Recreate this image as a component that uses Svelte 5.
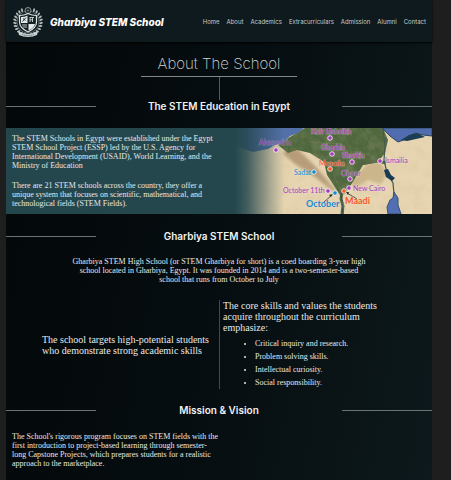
<script>
  const links = ['Home', 'About', 'Academics', 'Extracurriculars', 'Admission', 'Alumni', 'Contact'];
  const skills = ['Critical inquiry and research.', 'Problem solving skills.', 'Intellectual curiosity.', 'Social responsibility.'];
  const leaves = Array.from({ length: 22 }, (_, i) => {
    const side = i % 2 ? 1 : -1;
    const step = Math.floor(i / 2);
    const angle = (18 + step * 13.5) * Math.PI / 180;
    return { x: 16 + side * 13.2 * Math.sin(angle), y: 15 + 13.2 * Math.cos(angle), turn: side * (50 - step * 13) };
  });
  const purple = '#a63cba';
  const orange = '#f4591f';
  const blue = '#168bd2';
  const cities = [
    { name: 'Alexandria', x: 41, y: 22, tx: 24, ty: 17, color: purple, faded: true },
    { name: 'Kafr Elsheikh', x: 95, y: 10, tx: 76, ty: 6, color: purple },
    { name: 'Gharbia', x: 97, y: 26, tx: 86, ty: 22, color: purple },
    { name: 'Sharkia', x: 117, y: 34, tx: 107, ty: 30, color: purple },
    { name: 'Menofia', x: 95, y: 41, tx: 84, ty: 38, color: orange },
    { name: 'Sadat', x: 79, y: 44, tx: 59, ty: 47, color: blue },
    { name: 'Obour', x: 115, y: 51, tx: 106, ty: 48, color: purple },
    { name: 'Ismailia', x: 145, y: 33, tx: 150, ty: 35, color: purple },
    { name: 'New Cairo', x: 114, y: 60, tx: 118, ty: 63, color: purple },
    { name: 'October 11th', x: 93, y: 63, tx: 48, ty: 65, color: purple },
    { name: 'October', x: 100, y: 65, tx: 71, ty: 79, color: blue, big: true },
    { name: 'Maadi', x: 109, y: 63, tx: 110, ty: 76, color: orange, big: true }
  ];
</script>

<div class="page">
  <header>
    <a class="brand" href="#home">
      <svg class="crest" viewBox="0 0 32 31" aria-hidden="true">
        {#each leaves as leaf}
          <ellipse cx={leaf.x} cy={leaf.y} rx="1.9" ry="1" fill="#aeb8b9" transform="rotate({leaf.turn} {leaf.x} {leaf.y})" />
        {/each}
        <circle cx="16" cy="15" r="11" fill="none" stroke="#8b989a" stroke-width=".6" />
        <circle cx="16" cy="3.5" r="3" fill="#142023" stroke="#aab4b5" stroke-width=".8" />
        <path d="M14.5 3.5h3M16 2v3" stroke="#8b989a" stroke-width=".5" />
        <path d="M7.5 8.5Q12 8.5 16 6.5Q20 8.5 24.5 8.5V15Q24.5 21 16 25Q7.5 21 7.5 15Z" fill="#142023" stroke="#dce2e2" stroke-width="1.2" />
        <path d="M9 10Q13 10 15.5 8.5V16H9ZM16.5 17H23Q22 21 16.5 23.5Z" fill="#e3e8e8" />
        <path d="M10.5 14.5L14 10.5M11 11.5l2.5 2" stroke="#23363a" stroke-width="1" />
        <path d="M18 10v5M18 10.5h4M18 12.8h3M20.5 11v4M10 18h5M11 20h4" stroke="#cbd2d3" stroke-width=".9" />
        <path d="M6 24Q16 30 26 24L25 28Q16 32 7 28Z" fill="#cbd2d3" />
        <path d="M10 27.5Q16 29.5 22 27.5" fill="none" stroke="#43565a" stroke-width=".8" stroke-dasharray="1.2 .6" />
      </svg>
      <span>Gharbiya STEM School</span>
    </a>
    <nav>
      {#each links as link}
        <a href="#{link.toLowerCase()}">{link}</a>
      {/each}
    </nav>
  </header>

  <main>
    <div class="title">
      <h1>About The School</h1>
      <div class="stem"></div>
    </div>

    <h2><span>The STEM Education in Egypt</span></h2>
    <section class="panel">
      <div class="copy">
        <p>The STEM Schools in Egypt were established under the Egypt<br />STEM School Project (ESSP) led by the U.S. Agency for<br />International Development (USAID), World Learning, and the<br />Ministry of Education</p>
        <p>There are 21 STEM schools across the country, they offer a<br />unique system that focuses on scientific, mathematical, and<br />technological fields (STEM Fields).</p>
      </div>
      <svg class="map" viewBox="0 0 197 86" preserveAspectRatio="xMaxYMid slice" role="img" aria-label="STEM schools in northern Egypt">
        <defs>
          <linearGradient id="fade">
            <stop offset="0" stop-color="#24474e" />
            <stop offset=".06" stop-color="#24474e" stop-opacity=".85" />
            <stop offset=".25" stop-color="#24474e" stop-opacity="0" />
          </linearGradient>
          <filter id="terrain" x="0" y="0" width="100%" height="100%">
            <feTurbulence type="fractalNoise" baseFrequency=".09" numOctaves="4" seed="6" />
            <feColorMatrix values="0 0 0 0 .6  0 0 0 0 .48  0 0 0 0 .3  1.6 0 0 0 -.65" />
          </filter>
          <filter id="soft"><feGaussianBlur stdDeviation="1.6" /></filter>
        </defs>
        <rect width="197" height="86" fill="#e6d5b0" />
        <path d="M54 14L68 26L82 40L98 59L106 67L94 60L80 49L60 36L48 26Z" fill="#a38564" opacity=".7" filter="url(#soft)" />
        <path d="M132 36L145 34L152 46L146 56L133 52L120 60L115 54Z" fill="#cbb58a" filter="url(#soft)" />
        <path d="M43 17L55 9L70 0H148L153 12L150 25L143 34L128 37L119 52L110 66L105 67L92 47L89 34L75 25L62 22L53 25Z" fill="#50683f" />
        <path d="M72 5L93 20L97 42L106 64M105 0L115 20L118 36L110 64M125 0L137 18L144 32M73 14L108 16L139 29" fill="none" stroke="#64774c" stroke-width=".6" />
        <path d="M125 36L143 33L151 35M107 64L106 71L108 78L107 86" fill="none" stroke="#536344" stroke-width="3" />
        <path d="M106 65L107 75L108 86" fill="none" stroke="#304c4d" />
        <rect width="197" height="86" filter="url(#terrain)" opacity=".3" />
        <path d="M0 0H69L63 5L55 8L48 15L40 17L33 21L18 24L8 21L0 16Z" fill="#5470a8" />
        <path d="M147 0H197V8L188 7L180 5L171 11L163 14L155 8Z" fill="#526cb0" stroke="#29465c" />
        <path d="M166 12L174 7L182 5L190 9L181 11L172 13Z" fill="#1c3e54" />
        <path d="M148 2L150 18L149 32L152 45L158 55L159 66" fill="none" stroke="#425950" stroke-width="1.2" />
        <path d="M149 42L153 41L156 47L160 50L157 53L151 49Z" fill="#173b54" />
        <path d="M159 64L163 70L163 77L166 86H153L152 79L155 72L158 70Z" fill="#526fb4" stroke="#344f6c" />
        <rect width="197" height="86" fill="url(#fade)" />
        <path d="M89 74L97 67M122 71L112 65" stroke="#292e25" stroke-width=".8" />
        <path d="M98 66L94 67L96 69ZM111 64L113 67L114 64Z" fill="#292e25" />
        {#each cities as city}
          <circle cx={city.x} cy={city.y} r="2.3" fill={city.color} stroke="#f2ebf0" stroke-width=".9" />
          <text x={city.tx} y={city.ty} fill={city.color} class:big={city.big} class:faded={city.faded}>{city.name}</text>
        {/each}
      </svg>
    </section>

    <h2><span>Gharbiya STEM School</span></h2>
    <p class="intro">Gharbiya STEM High School (or STEM Gharbiya for short) is a coed boarding 3-year high<br />school located in Gharbiya, Egypt. It was founded in 2014 and is a two-semester-based<br />school that runs from October to July</p>

    <section class="columns">
      <p class="target">The school targets high-potential students<br />who demonstrate strong academic skills</p>
      <div class="core">
        <p>The core skills and values the students<br />acquire throughout the curriculum<br />emphasize:</p>
        <ul>
          {#each skills as skill}
            <li>{skill}</li>
          {/each}
        </ul>
      </div>
    </section>

    <h2><span>Mission &amp; Vision</span></h2>
    <p class="mission">The School's rigorous program focuses on STEM fields with the<br />first introduction to project-based learning through semester-<br />long Capstone Projects, which prepares students for a realistic<br />approach to the marketplace.</p>
  </main>
</div>

<style>
  :global(body) { margin: 0; background: #1e1e1e; }
  .page {
    min-height: 100vh;
    margin: 0 19px 0 6px;
    box-sizing: border-box;
    background: linear-gradient(100deg, #030809 0%, #060d10 50%, #0d191c 100%);
    color: #e6e9e9;
    font: 8px/9px "Liberation Serif", serif;
    white-space: nowrap;
  }
  h1, h2, p, ul { margin: 0; }
  a { color: inherit; text-decoration: none; }
  header {
    display: flex;
    align-items: center;
    justify-content: space-between;
    height: 42px;
    padding: 2px 6px 0;
    box-sizing: border-box;
    background: #0e1a1e;
    box-shadow: 0 1px 2px #000;
    font-family: Inter, sans-serif;
  }
  .brand { display: flex; align-items: center; gap: 6px; color: #fff; font-size: 10px; line-height: 12px; font-weight: 800; font-style: italic; }
  .crest { width: 32px; height: 31px; }
  nav { display: flex; gap: 7px; font-size: 6px; line-height: 8px; font-weight: 400; color: #c4cacb; }
  .title { display: flex; flex-direction: column; align-items: center; padding-top: 12px; }
  h1 {
    padding: 0 17px 2px;
    border-bottom: 1px solid #80888a;
    color: #d0d5d5;
    font: 200 15px/20px Inter, sans-serif;
  }
  .stem { width: 1px; height: 23px; background: #525b5d; }
  h2 {
    display: grid;
    grid-template-columns: 90px 1fr 90px;
    align-items: center;
    text-align: center;
    color: #f0f2f2;
    font: 600 10px/12px Inter, sans-serif;
  }
  h2::before, h2::after { content: ""; height: 1px; background: #6a7375; }
  .panel {
    display: grid;
    grid-template-columns: 229px 1fr;
    height: 86px;
    margin: 16px 0;
    background: #24474e;
  }
  .copy { display: flex; flex-direction: column; gap: 11px; padding: 6px; }
  .map { width: 100%; height: 86px; }
  .map text { font: 7px Lato, sans-serif; paint-order: stroke; stroke: #eee2e4; stroke-width: 1px; stroke-opacity: .4; }
  .map .big { font-size: 9px; font-weight: 700; }
  .map .faded { opacity: .65; }
  .intro { padding-top: 15px; text-align: center; }
  .columns {
    display: grid;
    grid-template-columns: 1fr 1fr;
    margin: 16px 0 15px;
    font-size: 10px;
    line-height: 11px;
  }
  .target { align-self: center; justify-self: end; padding-right: 10px; }
  .core { padding-left: 3px; border-left: 1px solid #414a4c; }
  ul { padding: 4px 0 0 32px; font-size: 8px; line-height: 13px; }
  .mission { padding: 16px 6px; }
</style>
